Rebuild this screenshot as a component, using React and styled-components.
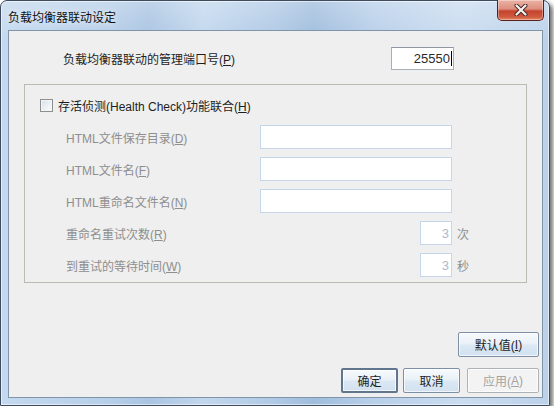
import React from 'react'
import styled, {createGlobalStyle} from 'styled-components'

const Global = createGlobalStyle`
    html, body {
        margin: 0;
        padding: 0;
        background: #ffffff;
    }
    body {
        font-family: 'Liberation Sans', 'Noto Sans CJK SC', sans-serif;
        font-size: 12px;
    }
`

const Window = styled.div`
    width: 550px;
    height: 406px;
    box-sizing: border-box;
    display: flex;
    flex-direction: column;
    border: 1px solid #3e4c5e;
    border-radius: 7px 7px 0 0;
    background:
        linear-gradient(180deg, rgba(255,255,255,0.25), rgba(255,255,255,0) 40px),
        linear-gradient(90deg, #c4d9ef 0%, #b6cee8 20%, #a9c4e2 27%, #c2d7ed 37%, #b0c9e5 50%, #9fbddd 57%, #b8cfe9 68%, #cadcf0 84%, #bcd2ea 100%);
    box-shadow: 3px 3px 4px rgba(0,0,0,0.55), inset 0 0 0 1px rgba(255,255,255,0.55);
`

const TitleBar = styled.div`
    height: 29px;
    flex: none;
    display: flex;
    align-items: center;
    padding-left: 7px;
`

const Title = styled.div`
    flex: 1;
    color: #111;
    font-size: 12px;
    padding-top: 1px;
    text-shadow: 0 0 6px rgba(255,255,255,0.9);
`

const CloseButton = styled.div`
    align-self: flex-start;
    margin-top: -1px;
    margin-right: 5px;
    width: 47px;
    height: 21px;
    box-sizing: border-box;
    border: 1px solid #5a1f18;
    border-top: none;
    border-radius: 0 0 5px 5px;
    background: linear-gradient(180deg, #eab3a6 0%, #dd8f7e 45%, #c5432e 55%, #cf5b3f 85%, #e48a66 100%);
    box-shadow: inset 0 0 0 1px rgba(255,255,255,0.35);
    display: flex;
    align-items: center;
    justify-content: center;
`

const Frame = styled.div`
    flex: 1;
    display: flex;
    padding: 0 6px 7px 7px;
    min-height: 0;
`

const Client = styled.div`
    flex: 1;
    display: flex;
    flex-direction: column;
    box-sizing: border-box;
    border: 1px solid #8094aa;
    background: #efefef;
    padding: 16px 3px 4px 15px;
`

const TopRow = styled.div`
    display: flex;
    align-items: center;
    justify-content: space-between;
    height: 23px;
    padding: 0 73px 0 39px;
    margin-right: 12px;
    margin-bottom: 14px;
`

const Label = styled.span`
    color: ${p => (p.$disabled ? '#8e8e8e' : '#1e1e1e')};
    white-space: nowrap;
`

const Key = styled.span`
    text-decoration: underline;
`

const PortInput = styled.div`
    width: 63px;
    height: 23px;
    box-sizing: border-box;
    border: 1px solid #a7afb9;
    border-top-color: #8e97a2;
    background: #fff;
    display: flex;
    align-items: center;
    justify-content: flex-end;
    padding-right: 1px;
    color: #2a2a2a;
    font-size: 13px;
`

const Caret = styled.span`
    display: inline-block;
    width: 1px;
    height: 15px;
    background: #000;
    margin-left: 1px;
`

const Group = styled.div`
    margin-right: 12px;
    border: 1px solid #bbbbb3;
    padding: 8px 0 5px 15px;
`

const CheckRow = styled.div`
    display: flex;
    align-items: center;
    height: 24px;
    margin-bottom: 8px;
    gap: 5px;
`

const CheckBox = styled.span`
    width: 13px;
    height: 13px;
    box-sizing: border-box;
    border: 1px solid #8f8f8f;
    background: linear-gradient(135deg, #d8dfe7 0%, #eef2f6 60%, #fbfcfd 100%);
    box-shadow: inset 0 0 0 1px #f4f4f4;
`

const Form = styled.div`
    display: grid;
    grid-template-columns: 194px 192px auto;
    grid-auto-rows: 24px;
    row-gap: 8px;
    align-items: center;
    margin-left: 26px;
`

const Field = styled.div`
    justify-self: ${p => (p.$small ? 'end' : 'stretch')};
    width: ${p => (p.$small ? '32px' : 'auto')};
    height: 24px;
    box-sizing: border-box;
    border: 1px solid #c6d6e9;
    background: #fff;
    display: flex;
    align-items: center;
    justify-content: flex-end;
    padding-right: 2px;
    color: #a9bacf;
    font-size: 13px;
`

const Unit = styled.span`
    color: #8e8e8e;
    padding-left: 5px;
`

const Footer = styled.div`
    margin-top: auto;
    display: flex;
    flex-direction: column;
    align-items: flex-end;
    gap: 11px;
`

const ButtonRow = styled.div`
    display: flex;
    gap: ${p => p.$gap || 0}px;
`

const Button = styled.div`
    width: ${p => p.$w}px;
    height: 25px;
    box-sizing: border-box;
    border: ${p => (p.$default ? '2px solid #60768f' : p.$disabled ? '1px solid #adb2b7' : '1px solid #7d8fa5')};
    border-radius: 2px;
    background: ${p =>
        p.$disabled
            ? '#f3f3f3'
            : 'linear-gradient(180deg, #f7fafd 0%, #eaf1f8 45%, #dbe7f3 55%, #d2e1f0 100%)'};
    box-shadow: inset 0 0 0 1px rgba(255,255,255,0.7);
    color: ${p => (p.$disabled ? '#a3a3a3' : '#1e1e1e')};
    display: flex;
    align-items: center;
    justify-content: center;
    margin-right: ${p => p.$mr || 0}px;
`

function CloseGlyph() {
    return (
        <svg width="14" height="12" viewBox="0 0 14 12">
            <path d="M2.5 1.5 L11.5 10.5 M11.5 1.5 L2.5 10.5" stroke="#4a2420" strokeWidth="4" strokeLinecap="round"/>
            <path d="M2.5 1.5 L11.5 10.5 M11.5 1.5 L2.5 10.5" stroke="#f4f4f4" strokeWidth="2.2" strokeLinecap="round"/>
        </svg>
    )
}

const rows = [
    {label: 'HTML文件保存目录', key: 'D'},
    {label: 'HTML文件名', key: 'F'},
    {label: 'HTML重命名文件名', key: 'N'},
    {label: '重命名重试次数', key: 'R', small: true, value: '3', unit: '次'},
    {label: '到重试的等待时间', key: 'W', small: true, value: '3', unit: '秒'},
]

export default function App() {
    return (
        <>
            <Global/>
            <Window>
                <TitleBar>
                    <Title>负载均衡器联动设定</Title>
                    <CloseButton><CloseGlyph/></CloseButton>
                </TitleBar>
                <Frame>
                    <Client>
                        <TopRow>
                            <Label>负载均衡器联动的管理端口号(<Key>P</Key>)</Label>
                            <PortInput>25550<Caret/></PortInput>
                        </TopRow>
                        <Group>
                            <CheckRow>
                                <CheckBox/>
                                <Label>存活侦测(Health Check)功能联合(<Key>H</Key>)</Label>
                            </CheckRow>
                            <Form>
                                {rows.map(r => (
                                    <React.Fragment key={r.key}>
                                        <Label $disabled>{r.label}(<Key>{r.key}</Key>)</Label>
                                        <Field $small={r.small}>{r.value}</Field>
                                        {r.unit ? <Unit>{r.unit}</Unit> : <span/>}
                                    </React.Fragment>
                                ))}
                            </Form>
                        </Group>
                        <Footer>
                            <ButtonRow>
                                <Button $w={81}>默认值(<Key>I</Key>)</Button>
                            </ButtonRow>
                            <ButtonRow>
                                <Button $w={57} $default $mr={5}>确定</Button>
                                <Button $w={57} $mr={7}>取消</Button>
                                <Button $w={72} $disabled>应用(<Key>A</Key>)</Button>
                            </ButtonRow>
                        </Footer>
                    </Client>
                </Frame>
            </Window>
        </>
    )
}
